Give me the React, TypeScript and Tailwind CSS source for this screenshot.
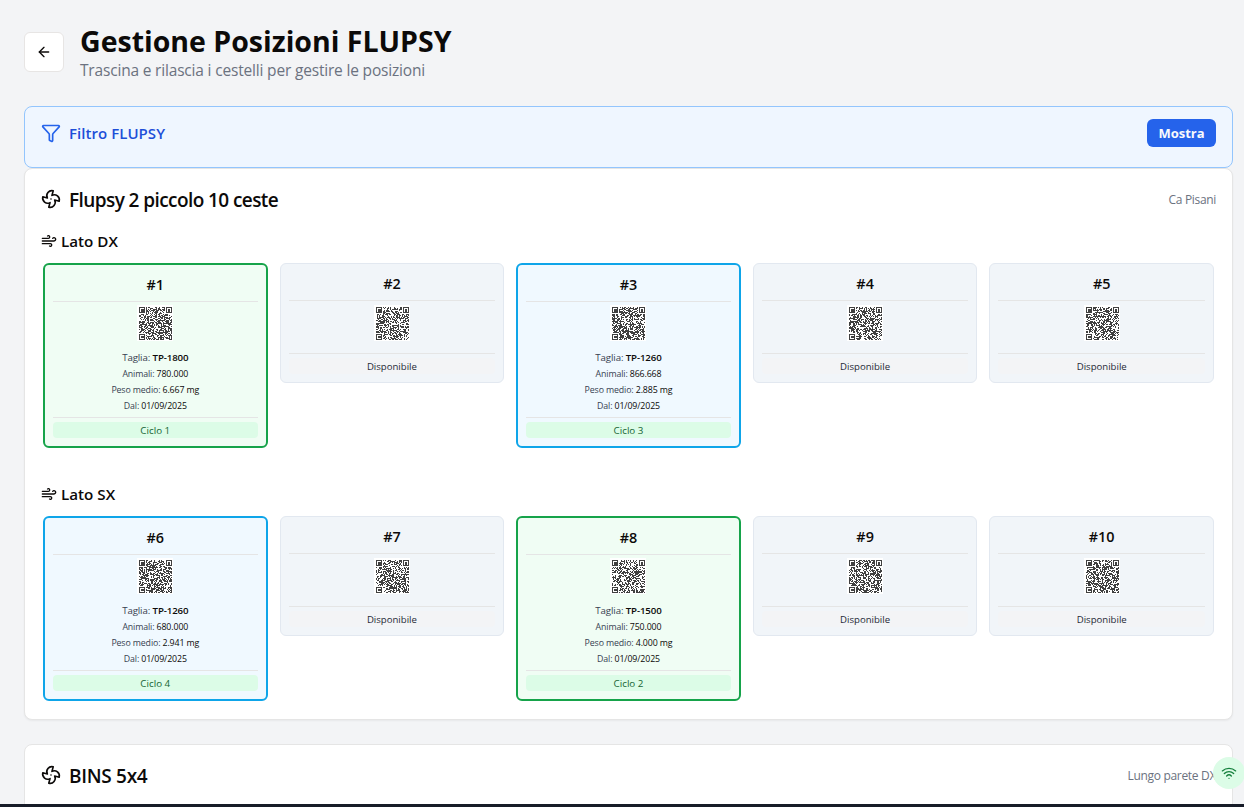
import React from "react";
import { ArrowLeft, Filter, Fan, Wind, Wifi } from "lucide-react";

type Basket = { n: number; kind: "green" | "sky" | "free"; size?: string; animals?: string; weight?: string; cycle?: number };

const dx: Basket[] = [
  { n: 1, kind: "green", size: "TP-1800", animals: "780.000", weight: "6.667 mg", cycle: 1 },
  { n: 2, kind: "free" },
  { n: 3, kind: "sky", size: "TP-1260", animals: "866.668", weight: "2.885 mg", cycle: 3 },
  { n: 4, kind: "free" },
  { n: 5, kind: "free" },
];
const sx: Basket[] = [
  { n: 6, kind: "sky", size: "TP-1260", animals: "680.000", weight: "2.941 mg", cycle: 4 },
  { n: 7, kind: "free" },
  { n: 8, kind: "green", size: "TP-1500", animals: "750.000", weight: "4.000 mg", cycle: 2 },
  { n: 9, kind: "free" },
  { n: 10, kind: "free" },
];

const N = 37;

function qrPath(seed: number) {
  let s = seed * 7919 + 17;
  const rnd = () => {
    s = (s * 1103515245 + 12345) % 2147483648;
    return s / 2147483648;
  };
  let d = "";
  for (let y = 0; y < N; y++) {
    for (let x = 0; x < N; x++) {
      const r = rnd();
      const corner = (x < 8 && y < 8) || (x > N - 9 && y < 8) || (x < 8 && y > N - 9);
      if (!corner && r < 0.52) d += `M${x} ${y}h1v1h-1z`;
    }
  }
  for (const [x, y] of [[0, 0], [N - 7, 0], [0, N - 7]]) {
    d += `M${x} ${y}h7v7h-7zM${x + 1} ${y + 1}v5h5v-5zM${x + 2} ${y + 2}h3v3h-3z`;
  }
  return d;
}

function Qr({ seed }: { seed: number }) {
  return (
    <svg className="size-9 bg-white" viewBox="-2.3 -2.3 40.36 40.36" shapeRendering="crispEdges">
      <path d={qrPath(seed)} fill="#404040" />
    </svg>
  );
}

function Row({ label, value, bold }: { label: string; value: string; bold?: boolean }) {
  return (
    <div className={bold ? "h-4 text-[9.7px] leading-[18px] whitespace-nowrap" : "h-4 text-[8.8px] leading-[18px] whitespace-nowrap"}>
      <span className="text-[#374151]">{label}: </span>
      <span className={bold ? "font-semibold text-[#0c0a09]" : "font-medium text-[#0c0a09]"}>{value}</span>
    </div>
  );
}

function BasketCard({ b }: { b: Basket }) {
  const free = b.kind === "free";
  const frame =
    b.kind === "green"
      ? "border-2 border-[#16a34a] bg-[#f0fdf4]"
      : b.kind === "sky"
        ? "border-2 border-[#0ea5e9] bg-[#f0f9ff]"
        : "border border-[#e2e8f0] bg-[#f1f5f9]";
  return (
    <div className={`rounded-md p-2 text-center ${frame}`}>
      <div className="h-[29px] border-b border-[#e5e5e5] text-[14.4px] leading-6 font-semibold">#{b.n}</div>
      <div className={free ? "flex h-[52px] justify-center pt-1" : "flex h-[47px] justify-center pt-[3px]"}>
        <Qr seed={b.n} />
      </div>
      {!free && (
        <div className="mb-1 tracking-[-0.12px]">
          <Row label="Taglia" value={b.size!} bold />
          <Row label="Animali" value={b.animals!} />
          <Row label="Peso medio" value={b.weight!} />
          <Row label="Dal" value="01/09/2025" />
        </div>
      )}
      <div className="border-t border-[#e5e5e5] pt-1">
        <div
          className={
            free
              ? "h-4 rounded bg-[#f3f4f6] text-[9.6px] leading-[17px] text-[#1f2937]"
              : "h-4 rounded bg-[#dcfce7] text-[9.8px] leading-[17px] text-[#166534]"
          }
        >
          {free ? "Disponibile" : `Ciclo ${b.cycle}`}
        </div>
      </div>
    </div>
  );
}

function Side({ name, items }: { name: string; items: Basket[] }) {
  return (
    <section>
      <h3 className="flex h-6 items-center gap-1 text-[15.2px] font-semibold">
        <Wind className="size-4" />
        <span className="pt-px">{name}</span>
      </h3>
      <div className="mt-[10px] grid grid-cols-5 items-start gap-3 px-[2px]">
        {items.map((b) => (
          <BasketCard key={b.n} b={b} />
        ))}
      </div>
    </section>
  );
}

function CardTitle({ title, place, className }: { title: string; place: string; className: string }) {
  return (
    <div className="flex h-7 items-center justify-between">
      <h2 className={`flex items-center gap-2 text-[19px] font-semibold ${className}`}>
        <Fan className="mb-0.5 size-5" />
        {title}
      </h2>
      <span className="text-[12px] tracking-[-0.32px] text-[#6b7280]">{place}</span>
    </div>
  );
}

export default function App() {
  return (
    <div className="relative flex h-[807px] flex-col overflow-hidden bg-[#f3f4f6] pr-[11px] pl-6 font-['Open_Sans',sans-serif] text-[#0c0a09]">
      <header className="flex h-[106px] shrink-0 gap-4 pt-6">
        <button className="mt-2 flex size-10 items-center justify-center rounded-md border border-[#e7e5e4] bg-white">
          <ArrowLeft className="size-4" />
        </button>
        <div>
          <h1 className="text-[28.5px] leading-[35px] font-bold whitespace-nowrap">Gestione Posizioni FLUPSY</h1>
          <p className="text-[15.5px] leading-[22px] tracking-[-0.18px] text-[#6b7280]">Trascina e rilascia i cestelli per gestire le posizioni</p>
        </div>
      </header>

      <div className="flex h-[62px] shrink-0 items-start justify-between rounded-lg border border-[#93c5fd] bg-[#eff6ff] px-4 pt-3">
        <div className="flex h-7 items-center gap-2 text-[15px] font-semibold tracking-[0.05px] text-[#1d4ed8]">
          <Filter className="size-5 text-[#2563eb]" />
          Filtro FLUPSY
        </div>
        <button className="h-7 w-[69px] rounded-md bg-[#2563eb] pt-px text-[13px] font-bold text-[#f8fafc]">Mostra</button>
      </div>

      <div className="h-[552px] shrink-0 rounded-lg border border-[#e5e5e5] bg-white px-4 pt-[17px] shadow-xs">
        <CardTitle title="Flupsy 2 piccolo 10 ceste" place="Ca Pisani" className="tracking-[-0.58px]" />
        <div className="mt-[15px] flex flex-col gap-[34px]">
          <Side name="Lato DX" items={dx} />
          <Side name="Lato SX" items={sx} />
        </div>
      </div>

      <div className="mt-6 h-24 shrink-0 rounded-lg border border-[#e5e5e5] bg-white px-4 pt-[17px]">
        <CardTitle title="BINS 5x4" place="Lungo parete DX" className="tracking-[-0.3px]" />
      </div>

      <div className="absolute top-[757px] left-[1213px] flex size-8 items-center justify-center rounded-full bg-[#dcfce7] text-[#15803d]">
        <Wifi className="size-4" />
      </div>
      <div className="absolute inset-x-0 bottom-0 h-[3px] bg-[#171c28]" />
    </div>
  );
}
